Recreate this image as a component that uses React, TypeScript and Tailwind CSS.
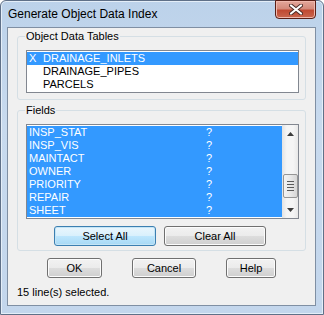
import { ReactNode } from 'react';

const font = { fontFamily: '"Liberation Sans", Arial, sans-serif' };

const tables = [
  { mark: 'X', name: 'DRAINAGE_INLETS', selected: true },
  { mark: '', name: 'DRAINAGE_PIPES', selected: false },
  { mark: '', name: 'PARCELS', selected: false },
];

const fields = ['INSP_STAT', 'INSP_VIS', 'MAINTACT', 'OWNER', 'PRIORITY', 'REPAIR', 'SHEET'];

function GroupBox({ label, className, children }: { label: string; className: string; children: ReactNode }) {
  return (
    <div className={`relative rounded-[3px] border border-[#d5dfe5] ${className}`}>
      <span className="absolute -top-[8px] left-[7px] bg-[#f0f0f0] px-[1px] text-[11px] leading-[14px] text-black">
        {label}
      </span>
      {children}
    </div>
  );
}

function Button({ children, width, focused }: { children: ReactNode; width: string; focused?: boolean }) {
  return (
    <button
      type="button"
      className={`${width} h-[20px] rounded-[3px] border text-[11px] leading-[18px] text-black ${
        focused
          ? 'border-[#3c7fb1] bg-[linear-gradient(#eaf6fd_0%,#d9f0fc_50%,#bee6fd_50%,#a7d9f5_100%)] shadow-[inset_0_0_0_1px_#c4e5f6]'
          : 'border-[#707070] bg-[linear-gradient(#f2f2f2_0%,#ebebeb_50%,#dddddd_50%,#cfcfcf_100%)] shadow-[inset_0_0_0_1px_#fcfcfc]'
      }`}
    >
      {children}
    </button>
  );
}

function ScrollBar() {
  return (
    <div className="flex w-[16px] flex-col items-center bg-[linear-gradient(90deg,#e3e3e3,#f5f5f5_30%,#f5f5f5_70%,#e8e8e8)]">
      <div className="flex h-[17px] w-full items-center justify-center">
        <svg width="7" height="4" viewBox="0 0 7 4">
          <path d="M3.5 0 L7 4 L0 4 Z" fill="#3c3c3c" />
        </svg>
      </div>
      <div className="h-[32px]" />
      <div className="flex h-[24px] w-[15px] flex-col items-center justify-center gap-[2px] rounded-[2px] border border-[#959595] bg-[linear-gradient(90deg,#f3f3f3,#e8e8e8_50%,#d6d6d6)]">
        <div className="h-[1px] w-[7px] bg-[#5a5a5a]" />
        <div className="h-[1px] w-[7px] bg-[#5a5a5a]" />
        <div className="h-[1px] w-[7px] bg-[#5a5a5a]" />
        <div className="h-[1px] w-[7px] bg-[#5a5a5a]" />
      </div>
      <div className="flex-1" />
      <div className="flex h-[17px] w-full items-center justify-center">
        <svg width="7" height="4" viewBox="0 0 7 4">
          <path d="M0 0 L7 0 L3.5 4 Z" fill="#3c3c3c" />
        </svg>
      </div>
    </div>
  );
}

export default function App() {
  return (
    <div
      style={font}
      className="flex h-[315px] w-[324px] flex-col rounded-t-[6px] border border-[#5f7088] bg-[linear-gradient(#bcd2ea,#c8daee_40%,#c3d6ec)] shadow-[inset_0_0_0_1px_#e4eef8]"
    >
      {/* Title bar */}
      <div className="relative flex h-[26px] items-center pl-[7px]">
        <span className="text-[12px] leading-[14px] text-black">Generate Object Data Index</span>
        <div className="absolute right-[7px] top-[-1px] flex h-[19px] w-[41px] items-center justify-center rounded-b-[4px] border border-[#5a1f16] bg-[linear-gradient(#e4a79b_0%,#d48a7b_45%,#c04a33_55%,#c9674f_100%)] shadow-[inset_0_0_0_1px_#f0b8ad]">
          <svg width="14" height="11" viewBox="0 0 14 11">
            <path d="M2 1.5 L12 9.5 M12 1.5 L2 9.5" stroke="#4a2a25" strokeWidth="4" strokeLinecap="round" />
            <path d="M2 1.5 L12 9.5 M12 1.5 L2 9.5" stroke="#ffffff" strokeWidth="2.2" strokeLinecap="round" />
          </svg>
        </div>
      </div>

      {/* Client area */}
      <div className="mb-[8px] ml-[6px] mr-[7px] flex flex-1 flex-col border border-[#7f8fa3] bg-[#f0f0f0] px-[9px] pt-[8px]">
        <GroupBox label="Object Data Tables" className="h-[64px] px-[8px] pt-[13px]">
          <div className="h-[43px] w-[273px] border border-[#828790] bg-white pt-[1px]">
            {tables.map((t) => (
              <div
                key={t.name}
                className={`flex h-[13px] items-center text-[11px] leading-[13px] ${
                  t.selected ? 'bg-[#3399ff] text-white' : 'text-black'
                }`}
              >
                <span className="w-[16px] pl-[2px]">{t.mark}</span>
                <span>{t.name}</span>
              </div>
            ))}
          </div>
        </GroupBox>

        <GroupBox label="Fields" className="mt-[10px] h-[141px] px-[8px] pt-[13px]">
          <div className="flex h-[95px] w-[273px] border border-[#828790] bg-white">
            <div className="mt-[1px] flex-1">
              {fields.map((f) => (
                <div key={f} className="flex h-[13px] items-center bg-[#3399ff] text-[11px] leading-[13px] text-white">
                  <span className="w-[179px] pl-[2px]">{f}</span>
                  <span>?</span>
                </div>
              ))}
            </div>
            <ScrollBar />
          </div>
          <div className="mt-[7px] flex gap-[8px] pl-[28px]">
            <Button width="w-[102px]" focused>
              Select All
            </Button>
            <Button width="w-[102px]">Clear All</Button>
          </div>
        </GroupBox>

        <div className="mt-[7px] flex pl-[30px]">
          <Button width="w-[55px]">OK</Button>
          <div className="w-[30px]" />
          <Button width="w-[64px]">Cancel</Button>
          <div className="w-[30px]" />
          <Button width="w-[50px]">Help</Button>
        </div>

        <div className="mt-[8px] text-[11px] leading-[13px] text-black">15 line(s) selected.</div>
      </div>
    </div>
  );
}
